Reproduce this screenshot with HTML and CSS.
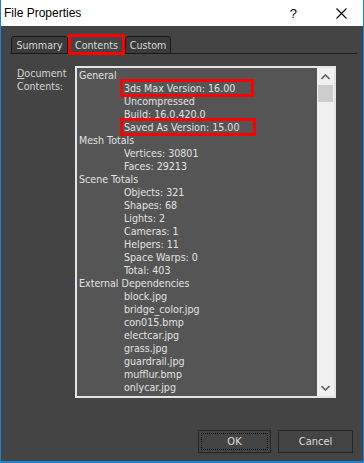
FILE: index.html
```html
<!DOCTYPE html>
<html lang="en">
<head>
  <meta charset="UTF-8" />
  <title>File Properties</title>
  <link rel="stylesheet" href="styles.css">
</head>
<body>

  <div class="window">
    <div class="titlebar">
      <span class="title">File Properties</span>
      <span class="help">?</span>
      <svg class="close" width="11" height="11" viewBox="0 0 11 11">
        <path d="M0.5 0.5 L10.5 10.5 M10.5 0.5 L0.5 10.5" stroke="#000" stroke-width="1.1" fill="none"/>
      </svg>
    </div>

    <div class="client">
      <div class="tabs">
        <div class="tab tab-summary">Summary</div>
        <div class="tab tab-active">Contents</div>
        <div class="tab tab-custom">Custom</div>
      </div>

      <div class="page">
        <div class="label"><u>D</u>ocument<br>Contents:</div>
        <div class="listbox">
          <div class="items">
            <div>General</div>
            <div class="sub"><span class="mark mark-a">3ds Max Version: 16.00</span></div>
            <div class="sub">Uncompressed</div>
            <div class="sub">Build: 16.0.420.0</div>
            <div class="sub"><span class="mark mark-b">Saved As Version: 15.00</span></div>
            <div>Mesh Totals</div>
            <div class="sub">Vertices: 30801</div>
            <div class="sub">Faces: 29213</div>
            <div>Scene Totals</div>
            <div class="sub">Objects: 321</div>
            <div class="sub">Shapes: 68</div>
            <div class="sub">Lights: 2</div>
            <div class="sub">Cameras: 1</div>
            <div class="sub">Helpers: 11</div>
            <div class="sub">Space Warps: 0</div>
            <div class="sub">Total: 403</div>
            <div>External Dependencies</div>
            <div class="sub">block.jpg</div>
            <div class="sub">bridge_color.jpg</div>
            <div class="sub">con015.bmp</div>
            <div class="sub">electcar.jpg</div>
            <div class="sub">grass.jpg</div>
            <div class="sub">guardrail.jpg</div>
            <div class="sub">mufflur.bmp</div>
            <div class="sub">onlycar.jpg</div>
            <div class="sub">oilbarrel.jpg</div>
          </div>
          <div class="scrollbar">
            <div class="arrow">
              <svg width="9" height="6" viewBox="0 0 9 6"><path d="M0.5 5 L4.5 1 L8.5 5" stroke="#606060" stroke-width="1.6" fill="none"/></svg>
            </div>
            <div class="thumb"></div>
            <div class="track"></div>
            <div class="arrow">
              <svg width="9" height="6" viewBox="0 0 9 6"><path d="M0.5 1 L4.5 5 L8.5 1" stroke="#606060" stroke-width="1.6" fill="none"/></svg>
            </div>
          </div>
        </div>
      </div>

      <div class="buttons">
        <button class="btn btn-ok">OK</button>
        <button class="btn">Cancel</button>
      </div>
    </div>
  </div>

</body>
</html>
```

FILE: styles.css
```css
* {
  box-sizing: border-box;
}

body {
  margin: 0;
  font-family: 'DejaVu Sans Condensed', 'DejaVu Sans', sans-serif;
  font-size: 10.6px;
  color: #dcdcdc;
}

.window {
  width: 364px;
  height: 463px;
  display: flex;
  flex-direction: column;
  border: 1px solid #1883d7;
  border-top: none;
  border-bottom-width: 2px;
}

.titlebar {
  height: 26px;
  background: #ffffff;
  display: flex;
  align-items: center;
  padding-left: 3px;
  color: #000;
  font-family: 'Liberation Sans', Arial, sans-serif;
  font-size: 12px;
}

.title {
  flex: 1;
}

.help {
  font-size: 13px;
  margin-right: 39px;
}

.close {
  margin-right: 16px;
}

.client {
  flex: 1;
  background: #444444;
  display: flex;
  flex-direction: column;
  padding: 7px 6px 8px 9px;
}

/* tab strip */
.tabs {
  display: flex;
  align-items: flex-end;
  height: 21px;
  border-bottom: 1px solid #1e1e1e;
  margin-bottom: 12px;
}

.tab {
  height: 18px;
  margin-bottom: -1px;
  border: 1px solid #1a1a1a;
  border-radius: 3px 3px 0 0;
  background: #3b3b3b;
  color: #d8d8d8;
  display: flex;
  align-items: center;
  justify-content: center;
}

.tab-summary {
  width: 57px;
  margin-left: 1px;
}

.tab-active {
  width: 57px;
  height: 21px;
  border: 3px solid #ff0000;
  border-radius: 0;
  background: #444444;
  margin-bottom: -2px;
}

.tab-custom {
  width: 46px;
}

/* content page */
.page {
  display: flex;
  padding-left: 7px;
}

.label {
  width: 58px;
  line-height: 13px;
  margin-top: 1px;
  color: #d4d4d4;
}

.listbox {
  width: 261px;
  height: 332px;
  border: 2px solid #e4e4e4;
  background: #555555;
  display: flex;
  overflow: hidden;
}

.items {
  flex: 1;
  padding: 1px 0 0 2px;
  line-height: 13px;
  color: #e2e2e2;
  white-space: nowrap;
  overflow: hidden;
}

.sub {
  padding-left: 45px;
}

.mark {
  position: relative;
}

.mark::after {
  content: '';
  position: absolute;
  left: -4px;
  top: -3px;
  bottom: -3px;
  border: 3px solid #ff0000;
}

.mark-a::after {
  width: 128px;
}

.mark-b::after {
  width: 130px;
}

.scrollbar {
  width: 17px;
  background: #f0f0f0;
  display: flex;
  flex-direction: column;
}

.arrow {
  height: 17px;
  display: flex;
  align-items: center;
  justify-content: center;
}

.thumb {
  height: 17px;
  margin: 0 1px;
  background: #cdcdcd;
}

.track {
  flex: 1;
}

/* dialog buttons */
.buttons {
  margin-top: auto;
  display: flex;
  justify-content: flex-end;
  gap: 7px;
  padding-right: 4px;
}

.btn {
  width: 75px;
  height: 23px;
  border: 1px solid #262626;
  background: #444444;
  color: #dcdcdc;
  font-family: inherit;
  font-size: 11px;
  padding: 0;
}

.btn-ok {
  width: 73px;
  outline: 1px dotted #000;
  outline-offset: -4px;
}
```
